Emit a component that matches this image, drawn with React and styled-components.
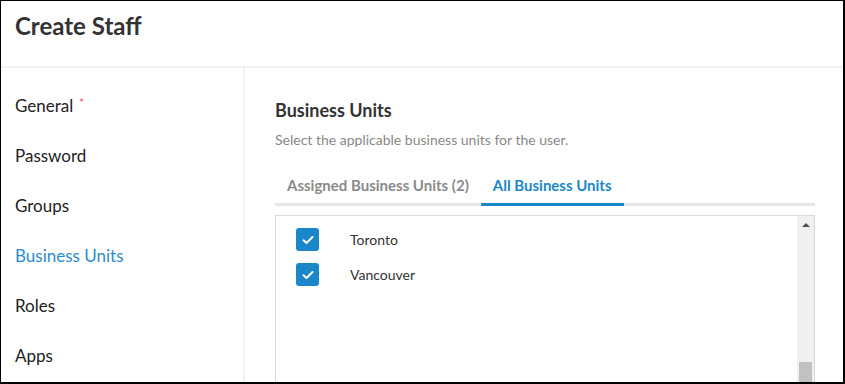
import React, { useState } from "react";
import styled, { createGlobalStyle } from "styled-components";

const GlobalStyle = createGlobalStyle`
  html, body { margin: 0; padding: 0; background: #fff; }
  body { font-family: Lato, "Open Sans", Arial, sans-serif; }
  * { box-sizing: border-box; }
`;

const Frame = styled.div`
  width: 845px;
  height: 384px;
  border-top: 1px solid #000;
  border-left: 1px solid #000;
  border-right: 2px solid #000;
  border-bottom: 2px solid #000;
  display: flex;
  flex-direction: column;
  overflow: hidden;
  background: #fff;
`;

const Header = styled.div`
  height: 67px;
  flex-shrink: 0;
  border-bottom: 2px solid #f2f2f2;
  padding: 9px 14px 0;

  h1 {
    margin: 0;
    font-size: 24px;
    line-height: 32px;
    font-weight: 700;
    color: #333;
  }
`;

const Body = styled.div`
  flex: 1;
  display: flex;
  min-height: 0;
`;

const Sidebar = styled.nav`
  width: 244px;
  flex-shrink: 0;
  border-right: 2px solid #f2f2f2;
  padding: 13px 0 0 14px;
  display: flex;
  flex-direction: column;
`;

const NavItem = styled.div`
  height: 50px;
  line-height: 50px;
  font-size: 17px;
  color: ${(p) => (p.$active ? "#2b8bd0" : "#222")};
  cursor: pointer;

  sup {
    color: #e8574e;
    font-size: 11px;
    margin-left: 6px;
    vertical-align: 5px;
    line-height: 0;
  }
`;

const Content = styled.section`
  flex: 1;
  padding: 31px 28px 0 30px;
  display: flex;
  flex-direction: column;
  min-width: 0;
`;

const Title = styled.h2`
  margin: 0;
  font-size: 18px;
  line-height: 22px;
  font-weight: 700;
  color: #333;
`;

const Subtitle = styled.p`
  margin: 10px 0 0;
  font-size: 14px;
  line-height: 18px;
  color: #888;
`;

const Tabs = styled.div`
  margin-top: 18px;
  display: flex;
  border-bottom: 3px solid #e6e6e6;
`;

const Tab = styled.div`
  padding: 0 12px;
  height: 39px;
  line-height: 36px;
  font-size: 15px;
  font-weight: 700;
  color: ${(p) => (p.$active ? "#1a87c9" : "#8a8a8a")};
  margin-bottom: -3px;
  border-bottom: 3px solid ${(p) => (p.$active ? "#1a87c9" : "transparent")};
  cursor: pointer;
`;

const ListBox = styled.div`
  margin-top: 9px;
  flex: 1;
  border: 1px solid #d6dbe1;
  border-bottom: none;
  display: flex;
  min-height: 0;
`;

const Items = styled.div`
  flex: 1;
  padding: 12px 0 0 20px;
  display: flex;
  flex-direction: column;
  gap: 12px;
`;

const Row = styled.label`
  display: flex;
  align-items: center;
  height: 23px;
  font-size: 14px;
  color: #333;
  cursor: pointer;
`;

const Box = styled.span`
  width: 23px;
  height: 23px;
  border-radius: 3px;
  background: ${(p) => (p.$checked ? "#1a87c9" : "#fff")};
  border: ${(p) => (p.$checked ? "none" : "1px solid #b5bcc4")};
  display: flex;
  align-items: center;
  justify-content: center;
  margin-right: 31px;
  flex-shrink: 0;
`;

const Scrollbar = styled.div`
  width: 17px;
  background: #f0f0f0;
  display: flex;
  flex-direction: column;
  justify-content: space-between;
  align-items: center;
  padding-top: 7px;
`;

const Arrow = styled.span`
  width: 0;
  height: 0;
  border-left: 4px solid transparent;
  border-right: 4px solid transparent;
  border-bottom: 4px solid #505050;
`;

const Thumb = styled.div`
  width: 13px;
  height: 20px;
  background: #c1c1c1;
`;

const Check = () => (
  <svg width="12" height="10" viewBox="0 0 12 10">
    <path d="M1.5 5.2 L4.5 8 L10.5 2" fill="none" stroke="#fff" strokeWidth="2" strokeLinecap="round" strokeLinejoin="round" />
  </svg>
);

const navItems = ["General", "Password", "Groups", "Business Units", "Roles", "Apps"];

export default function App() {
  const [units, setUnits] = useState([
    { name: "Toronto", checked: true },
    { name: "Vancouver", checked: true },
  ]);

  const toggle = (i) =>
    setUnits(units.map((u, j) => (j === i ? { ...u, checked: !u.checked } : u)));

  return (
    <>
      <GlobalStyle />
      <Frame>
        <Header>
          <h1>Create Staff</h1>
        </Header>
        <Body>
          <Sidebar>
            {navItems.map((item) => (
              <NavItem key={item} $active={item === "Business Units"}>
                {item}
                {item === "General" && <sup>*</sup>}
              </NavItem>
            ))}
          </Sidebar>
          <Content>
            <Title>Business Units</Title>
            <Subtitle>Select the applicable business units for the user.</Subtitle>
            <Tabs>
              <Tab>Assigned Business Units (2)</Tab>
              <Tab $active>All Business Units</Tab>
            </Tabs>
            <ListBox>
              <Items>
                {units.map((u, i) => (
                  <Row key={u.name} onClick={() => toggle(i)}>
                    <Box $checked={u.checked}>{u.checked && <Check />}</Box>
                    {u.name}
                  </Row>
                ))}
              </Items>
              <Scrollbar>
                <Arrow />
                <Thumb />
              </Scrollbar>
            </ListBox>
          </Content>
        </Body>
      </Frame>
    </>
  );
}
